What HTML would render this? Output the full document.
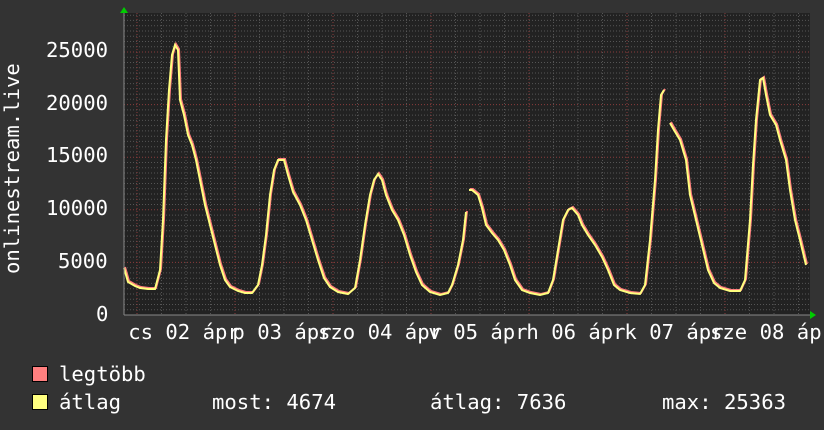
<!DOCTYPE html>
<html><head><meta charset="utf-8"><style>
body{margin:0;width:824px;height:430px;background:#333;overflow:hidden;position:relative;font-family:"DejaVu Sans Mono","Liberation Mono",monospace;color:#fff}
.t{position:absolute;font-size:20.6px;line-height:20px;white-space:pre}
.xl{position:absolute;top:322px;font-size:20.6px;line-height:20px;white-space:pre;width:160px;text-align:center}
.sq{position:absolute;left:32px;width:14px;height:14px;border:1px solid #000}
</style></head><body>
<svg width="824" height="430" style="position:absolute;left:0;top:0">
<rect x="124" y="13" width="686" height="302" fill="#222"/>
<g id="grid"></g>
<g fill="none" stroke="#ff7f7f" stroke-width="2" transform="translate(1,-1)">
<polyline points="124,268 128,282 135,286 140,288 148,289 155,289 160,270 163,220 166,140 169,90 172,55 175,45 178,50 180,100 184,115 188,135 192,145 196,160 200,180 205,205 210,225 215,245 220,265 225,280 230,287 238,291 245,293 252,293 258,285 262,265 266,235 270,195 274,170 278,160 284,160 288,175 293,192 300,205 306,220 312,240 318,260 324,278 330,287 338,292 348,294 355,288 360,260 365,225 370,195 374,180 378,174 382,180 386,195 392,210 398,220 404,235 410,255 416,272 422,285 430,292 440,295 448,293 452,285 458,265 463,240 466,212"/>
<polyline points="469,190 472,190 478,195 482,208 486,225 492,233 498,240 504,250 510,265 515,280 522,290 530,293 540,295 548,293 553,280 558,250 563,220 568,210 572,208 578,215 582,225 588,235 595,245 602,257 608,270 614,285 620,290 630,293 640,294 645,285 650,240 655,180 658,130 661,95 664,90"/>
<polyline points="670,123 674,130 680,140 686,160 690,195 696,220 702,245 708,270 714,283 720,288 730,291 740,291 745,280 750,220 753,165 756,120 760,80 763,78 766,95 770,115 776,125 780,140 786,160 790,190 795,220 800,240 806,265"/>
</g>
<g fill="none" stroke="#ffff7f" stroke-width="2">
<polyline points="124,268 128,282 135,286 140,288 148,289 155,289 160,270 163,220 166,140 169,90 172,55 175,45 178,50 180,100 184,115 188,135 192,145 196,160 200,180 205,205 210,225 215,245 220,265 225,280 230,287 238,291 245,293 252,293 258,285 262,265 266,235 270,195 274,170 278,160 284,160 288,175 293,192 300,205 306,220 312,240 318,260 324,278 330,287 338,292 348,294 355,288 360,260 365,225 370,195 374,180 378,174 382,180 386,195 392,210 398,220 404,235 410,255 416,272 422,285 430,292 440,295 448,293 452,285 458,265 463,240 466,212"/>
<polyline points="469,190 472,190 478,195 482,208 486,225 492,233 498,240 504,250 510,265 515,280 522,290 530,293 540,295 548,293 553,280 558,250 563,220 568,210 572,208 578,215 582,225 588,235 595,245 602,257 608,270 614,285 620,290 630,293 640,294 645,285 650,240 655,180 658,130 661,95 664,90"/>
<polyline points="670,123 674,130 680,140 686,160 690,195 696,220 702,245 708,270 714,283 720,288 730,291 740,291 745,280 750,220 753,165 756,120 760,80 763,78 766,95 770,115 776,125 780,140 786,160 790,190 795,220 800,240 806,265"/>
</g>
<line x1="124" y1="315" x2="810" y2="315" stroke="#888"/>
<line x1="124" y1="12" x2="124" y2="315" stroke="#888"/>
<polygon points="120,13 128,13 124,7" fill="#0c0"/>
<polygon points="810,311 810,319 816,315" fill="#0c0"/>
</svg>
<script>
(function(){var g=document.getElementById('grid'),h='';
for(var i=1;i<58;i++){var y=315-5.26*i;var maj=i%10==0;h+='<line x1="124" x2="810" y1="'+y.toFixed(1)+'" y2="'+y.toFixed(1)+'" stroke="'+(maj?'#8a3c3c':'#555')+'" stroke-dasharray="1,2"/>';}
for(var x=137;x<810;x+=24.5){var k=Math.round((x-137)/24.5);h+='<line y1="13" y2="315" x1="'+x.toFixed(1)+'" x2="'+x.toFixed(1)+'" stroke="'+(k%4==0?'#8a3c3c':'#555')+'" stroke-dasharray="1,2"/>';}
for(var x=112.5;x>124;x-=24.5){}
g.innerHTML=h;})();
</script>
<div class="t" style="left:46px;top:40px">25000</div>
<div class="t" style="left:46px;top:93px">20000</div>
<div class="t" style="left:46px;top:145px">15000</div>
<div class="t" style="left:46px;top:198px">10000</div>
<div class="t" style="left:58px;top:251px">5000</div>
<div class="t" style="left:96px;top:304px">0</div>
<div class="t" style="left:2px;top:274px;transform-origin:0 0;transform:rotate(-90deg)">onlinestream.live</div>
<div class="xl" style="left:104px">cs 02 ápr</div>
<div class="xl" style="left:202px">p 03 ápr</div>
<div class="xl" style="left:300px">szo 04 ápr</div>
<div class="xl" style="left:398px">v 05 ápr</div>
<div class="xl" style="left:496px">h 06 ápr</div>
<div class="xl" style="left:594px">k 07 ápr</div>
<div class="xl" style="left:692px">sze 08 ápr</div>
<div class="sq" style="top:366px;background:#ff7f7f"></div>
<div class="sq" style="top:394px;background:#ffff7f"></div>
<div class="t" style="left:59px;top:364px">legtöbb</div>
<div class="t" style="left:59px;top:392px">átlag</div>
<div class="t" style="left:212px;top:392px">most: 4674</div>
<div class="t" style="left:430px;top:392px">átlag: 7636</div>
<div class="t" style="left:662px;top:392px">max: 25363</div>
</body></html>
